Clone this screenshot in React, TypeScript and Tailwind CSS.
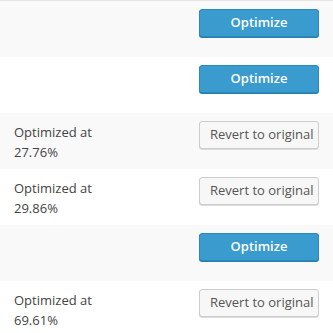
const rows: { pct?: string }[] = [{}, {}, { pct: "27.76%" }, { pct: "29.86%" }, {}, { pct: "69.61%" }];

export default function App() {
  return (
    <div className="w-[333px] h-[333px] overflow-hidden bg-white border-t border-[#e5e5e5] font-['Open_Sans',sans-serif] text-[13px] text-[#444]">
      {rows.map((r, i) => (
        <div
          key={i}
          className={`flex justify-between items-start h-[56px] pl-[14px] pr-[14px] pt-[8px] ${i % 2 === 0 ? "bg-[#f9f9f9]" : "bg-white"}`}
        >
          <div className="leading-[20px] pt-[1px]">
            {r.pct && (
              <>
                <div>Optimized at</div>
                <div>{r.pct}</div>
              </>
            )}
          </div>
          {r.pct ? (
            <button className="w-[120px] h-[28px] rounded-[3px] border border-[#cccccc] bg-[#f7f7f7] text-[#555] text-[13px] pl-[10px] text-left whitespace-nowrap overflow-hidden shadow-[0_1px_0_#ddd]">
              Revert to original
            </button>
          ) : (
            <button className="w-[120px] h-[28px] rounded-[3px] border border-[#2b88bb] bg-[#3a9bcf] text-white text-[13px] font-semibold shadow-[0_1px_0_#2680b0]">
              Optimize
            </button>
          )}
        </div>
      ))}
    </div>
  );
}
